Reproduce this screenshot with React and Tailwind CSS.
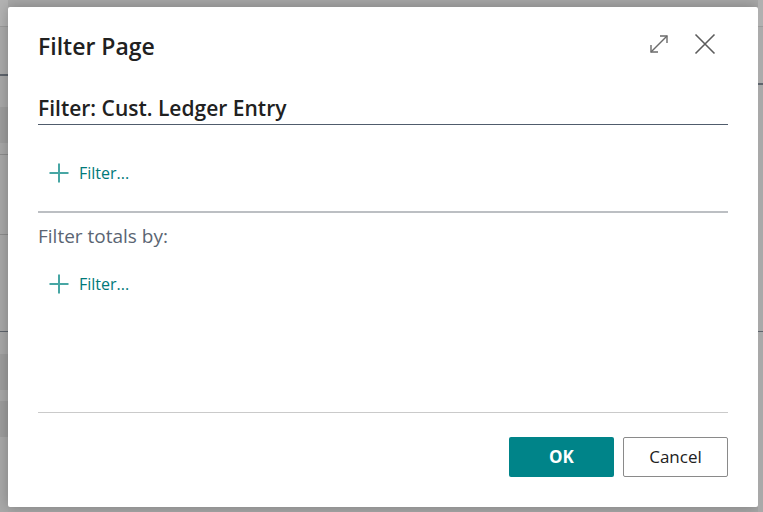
import React from "react";

function Plus() {
  return (
    <svg width="20" height="20" viewBox="0 0 20 20" className="shrink-0">
      <path d="M10 0.5v19M0.5 10h19" stroke="#47a6a4" strokeWidth="2" fill="none" />
    </svg>
  );
}

function AddFilter() {
  return (
    <div className="flex h-[20px] items-center gap-[10px] pl-[11px] text-[16px] leading-[20px] text-[#00797a]">
      <Plus />
      <span>Filter...</span>
    </div>
  );
}

export default function App() {
  return (
    <div
      className="flex h-[512px] w-[763px] overflow-hidden bg-[#a8a8a8]"
      style={{ fontFamily: '"Open Sans", "Noto Sans", sans-serif' }}
    >
      {/* left strip of dimmed page */}
      <div className="flex w-[8px] shrink-0 flex-col">
        <div className="h-[26px] bg-[#b3b3b3]" />
        <div className="h-[1px] bg-[#9b9b9b]" />
        <div className="h-[47px] bg-[#ababab]" />
        <div className="h-[2px] bg-[#5e646c]" />
        <div className="h-[31px] bg-[#a9a9a9]" />
        <div className="h-[36px] bg-[#9e9e9e]" />
        <div className="h-[11px] bg-[#a8a8a8]" />
        <div className="h-[1px] bg-[#8c8c8c]" />
        <div className="h-[79px] bg-[#a8a8a8]" />
        <div className="h-[1px] bg-[#8c8c8c]" />
        <div className="h-[96px] bg-[#a8a8a8]" />
        <div className="h-[1px] bg-[#5e646c]" />
        <div className="h-[22px] bg-[#a8a8a8]" />
        <div className="h-[36px] bg-[#9d9d9d]" />
        <div className="h-[11px] bg-[#a8a8a8]" />
        <div className="h-[36px] bg-[#9d9d9d]" />
        <div className="flex-1 bg-[#a9a9a9]" />
      </div>

      {/* dialog column */}
      <div className="flex w-[750px] shrink-0 flex-col pt-[7px] pb-[5px]">
        <div className="flex flex-1 flex-col rounded-[2px] bg-white px-[30px] shadow-[0_0_14px_rgba(0,0,0,0.25)]">
          {/* header */}
          <div className="flex h-[86px] items-start justify-between pt-[22px]">
            <h1 className="text-[23px] leading-[34px] font-semibold text-[#212121]">Filter Page</h1>
            <div className="flex items-center gap-[25px] pt-[4px] pr-[12px]">
              <svg width="20" height="20" viewBox="0 0 20 20">
                <g stroke="#6b6b6b" strokeWidth="1.4" fill="none">
                  <path d="M2 18L18 2" />
                  <path d="M11 2h7v7" />
                  <path d="M2 11v7h7" />
                </g>
              </svg>
              <svg width="22" height="22" viewBox="0 0 22 22">
                <path d="M1.5 1.5l19 19M20.5 1.5l-19 19" stroke="#5c5c5c" strokeWidth="1.6" fill="none" />
              </svg>
            </div>
          </div>

          {/* filter heading */}
          <div className="border-b border-[#505c6c] pb-[1px]">
            <div className="text-[21px] leading-[30px] font-semibold text-[#212121]">Filter: Cust. Ledger Entry</div>
          </div>

          <div className="h-[86px] pt-[38px]">
            <AddFilter />
          </div>

          <div className="h-[2px] bg-[#bcbfc3]" />

          <div className="pt-[11px] text-[19px] leading-[24px] text-[#5b6573]">Filter totals by:</div>

          <div className="pt-[26px]">
            <AddFilter />
          </div>

          <div className="flex-1" />

          <div className="h-[1px] bg-[#cacaca]" />

          <div className="flex justify-end gap-[9px] pt-[24px] pb-[30px]">
            <button className="h-[40px] w-[105px] rounded-[2px] bg-[#008489] text-[17px] font-bold text-white">OK</button>
            <button className="h-[40px] w-[105px] rounded-[2px] border border-[#8a8a8a] bg-white text-[17px] text-[#212121]">Cancel</button>
          </div>
        </div>
      </div>

      {/* right strip */}
      <div className="flex flex-1 flex-col">
        <div className="h-[26px] bg-[#b0b0b0]" />
        <div className="h-[1px] bg-[#9b9b9b]" />
        <div className="h-[56px] bg-[#ababab]" />
        <div className="h-[2px] bg-[#5e646c]" />
        <div className="h-[246px] bg-[#a9a9a9]" />
        <div className="h-[1px] bg-[#5e646c]" />
        <div className="flex-1 bg-[#a9a9a9]" />
      </div>
    </div>
  );
}
